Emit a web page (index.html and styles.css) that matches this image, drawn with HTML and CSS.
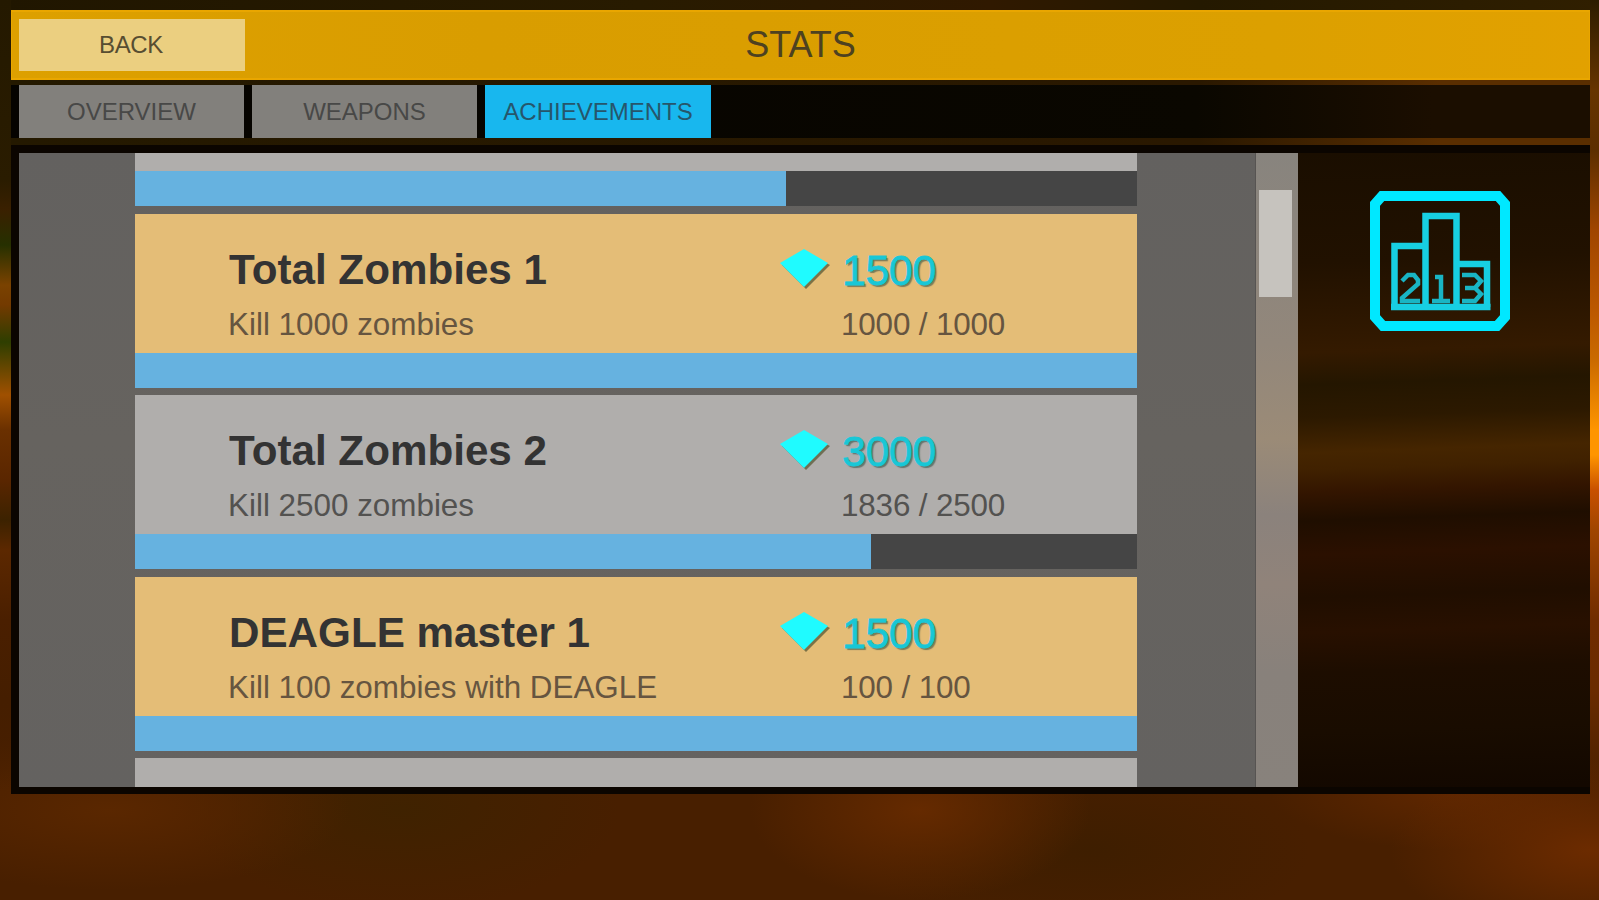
FILE: index.html
```
<!DOCTYPE html>
<html lang="en">

<head>
    <meta charset="UTF-8">
    <meta name="viewport" content="width=device-width, initial-scale=1.0">
    <title>Stats</title>
    <link rel="stylesheet" href="styles.css">
</head>

<body>
    <svg class="sprite" width="0" height="0">
        <symbol id="gem" viewBox="0 0 52 44">
            <path d="M3 17 L27 4 L51 17 L27 41 Z" fill="#5a5a35" opacity="0.75" />
            <path d="M1 15 L25 1 L49 15 L25 39 Z" fill="#1ffbff" />
        </symbol>
    </svg>
    <div class="wrapper">
        <header class="header">
            <button class="back">BACK</button>
            <h1 class="header__title">STATS</h1>
        </header>
        <nav class="tabs">
            <button class="tab">OVERVIEW</button>
            <button class="tab">WEAPONS</button>
            <button class="tab tab_active">ACHIEVEMENTS</button>
        </nav>
        <main class="panel">
            <div class="content">
                <div class="list">
                    <div class="item">
                        <div class="item__body"></div>
                        <div class="progress"><div class="progress__fill" style="width: 65%"></div></div>
                    </div>
                    <div class="item item_done">
                        <div class="item__body">
                            <div class="item__title">Total Zombies 1</div>
                            <div class="reward"><svg class="gem"><use href="#gem" /></svg>1500</div>
                            <div class="item__text">Kill 1000 zombies</div>
                            <div class="item__count">1000 / 1000</div>
                        </div>
                        <div class="progress"><div class="progress__fill" style="width: 100%"></div></div>
                    </div>
                    <div class="item">
                        <div class="item__body">
                            <div class="item__title">Total Zombies 2</div>
                            <div class="reward"><svg class="gem"><use href="#gem" /></svg>3000</div>
                            <div class="item__text">Kill 2500 zombies</div>
                            <div class="item__count">1836 / 2500</div>
                        </div>
                        <div class="progress"><div class="progress__fill" style="width: 73.44%"></div></div>
                    </div>
                    <div class="item item_done">
                        <div class="item__body">
                            <div class="item__title">DEAGLE master 1</div>
                            <div class="reward"><svg class="gem"><use href="#gem" /></svg>1500</div>
                            <div class="item__text">Kill 100 zombies with DEAGLE</div>
                            <div class="item__count">100 / 100</div>
                        </div>
                        <div class="progress"><div class="progress__fill" style="width: 100%"></div></div>
                    </div>
                    <div class="item">
                        <div class="item__body"></div>
                    </div>
                </div>
                <div class="scroll">
                    <div class="scroll__thumb"></div>
                </div>
            </div>
            <aside class="side">
                <svg class="leaderboard" viewBox="0 0 142 142" fill="none">
                    <path d="M13 6 H129 L136 14 V127 L128 136 H14 L6 127 V14 Z" stroke="#00e8ff" stroke-width="10" />
                    <g stroke="#17cfe2" stroke-width="6.500">
                        <path d="M25.5 117 V56 H56" />
                        <path d="M56.500 117 V26 H87.500 V117" />
                        <path d="M87.500 74 H118 V117" />
                        <path d="M22 117 H121.500" />
                    </g>
                    <g stroke="#19b5c4" stroke-width="4.500">
                        <path d="M33 91 L39 85 H45 L49 90 V94 L33 108 V111 H51" />
                        <path d="M66 87 H72 V110 M63 111 H81" />
                        <path d="M93 85 H106 L112 91 L106 98 H96 M106 98 L112 104 L106 111 H93" />
                    </g>
                </svg>
            </aside>
        </main>
    </div>
</body>

</html>
```
FILE: styles.css
```
* {
    box-sizing: border-box;
    margin: 0;
    padding: 0;
}

body {
    width: 100vw;
    height: 100vh;
    overflow: hidden;
    font-family: "Liberation Sans", Arial, sans-serif;
    color: #333;
    background:
        linear-gradient(#241900 0, #2a1c00 180px, #3a2000 210px, #263000 245px, #7a4200 285px, #733a00 305px, #2e3e00 342px, #a05000 395px, #6a3000 430px, #5a2600 480px, #3c2200 520px, #5c2800 550px, #4a1f00 620px, #451e00 700px, transparent 790px) left / 11px 100% no-repeat,
        linear-gradient(#2c1c00 0, #663400 90px, #5c2e00 150px, #a04500 230px, #bd5900 315px, #ca6a00 360px, #ff9500 430px, #ff9500 455px, #c85000 490px, #a04500 530px, #702c00 620px, #6a2b00 690px, transparent 790px) right / 9px 100% no-repeat,
        linear-gradient(to right, #201600, #281b00 40%, #301900 62%, #241900 75%, #301f00) top / 100% 12px no-repeat,
        linear-gradient(to right, #241900, #2a1800 75%, #5a2e00 90%) top / 100% 200px no-repeat,
        radial-gradient(ellipse 170px 90px at 920px 810px, #652a00, transparent) no-repeat,
        radial-gradient(ellipse 240px 80px at 110px 810px, #5a2700, transparent) no-repeat,
        radial-gradient(ellipse 220px 100px at 400px 810px, #3f2200, transparent) no-repeat,
        radial-gradient(ellipse 220px 90px at 1090px 850px, #3e1e00, transparent) no-repeat,
        radial-gradient(ellipse 200px 90px at 1590px 850px, #6c2b00, transparent) no-repeat,
        radial-gradient(ellipse 180px 60px at 1450px 790px, #602700, transparent) no-repeat,
        #481f00;
}

button {
    border: none;
    font-family: inherit;
    color: inherit;
}

.sprite {
    position: absolute;
}

.wrapper {
    padding: 10px 9px 0 11px;
}

.header {
    height: 70px;
    padding: 7px 7px 9px;
    display: grid;
    grid-template-columns: 226px 1fr 226px;
    align-items: center;
    background: linear-gradient(to right, #dda000, #d99d00 30%, #dca000 80%, #e2a100);
    border: 2px solid #e9a600;
    border-width: 2px 1px;
}

.back {
    height: 52px;
    padding-right: 2px;
    font-size: 24px;
    letter-spacing: -0.4px;
    color: #574d31;
    background: #ebcf80;
}

.header__title {
    font-size: 36px;
    font-weight: 400;
    text-align: center;
    color: #4d4120;
}

.tabs {
    height: 53px;
    margin-top: 5px;
    padding-left: 8px;
    display: flex;
    gap: 8px;
    background: linear-gradient(to right, #050300, #0a0700 75%, #1b0e00 90%);
}

.tab {
    width: 225px;
    font-size: 24px;
    color: #484847;
    background: #82807c;
}

.tab_active {
    width: 226px;
    color: #26566b;
    background: #18b7ee;
}

.panel {
    height: 649px;
    margin-top: 7px;
    padding: 8px 0 7px 8px;
    display: flex;
    background: #0b0500;
}

.content {
    width: 1279px;
    display: flex;
    justify-content: space-between;
    overflow: hidden;
    background: linear-gradient(#63615f, #66635f 45%, #646260);
}

.list {
    width: 1002px;
    height: 900px;
    margin: -120.6px 0 0 116px;
    display: flex;
    flex-direction: column;
    gap: 7.5px;
    flex-shrink: 0;
}

.item {
    height: 174px;
    flex-shrink: 0;
    background: #b0aeac;
}

.item_done {
    background: #e4bd77;
}

.item__body {
    height: 139px;
    padding: 31px 0 0 94px;
    display: grid;
    grid-template-columns: 550px 1fr;
    grid-template-rows: 50px 58px;
}

.item__title {
    font-size: 42.2px;
    font-weight: 700;
    line-height: 50px;
}

.reward {
    display: flex;
    align-items: center;
    gap: 11px;
    font-size: 43px;
    line-height: 50px;
    letter-spacing: -0.5px;
    color: #18c7d6;
    -webkit-text-stroke: 0.8px #18c7d6;
    text-shadow: 2px 2px 1px rgba(50, 80, 70, 0.6);
}

.gem {
    width: 52px;
    height: 44px;
}

.item__text,
.item__count {
    margin-left: -1px;
    font-size: 31.4px;
    line-height: 59px;
    color: #665540;
}

.item:not(.item_done) .item__text,
.item:not(.item_done) .item__count {
    color: #535250;
}

.item__count {
    padding-left: 63px;
    letter-spacing: -0.15px;
}

.progress {
    height: 35px;
    background: #454545;
}

.progress__fill {
    height: 100%;
    background: #66b2e0;
}

.scroll {
    width: 43px;
    height: 100%;
    padding: 37px 6px 0 3px;
    border-left: 1px solid #575452;
    background: linear-gradient(#88847e, #92877b 30%, #9b8b77 45%, #8b827c 57%, #90837a 68%, #88817b 82%, #88827c);
}

.scroll__thumb {
    height: 107px;
    background: #c6c3be;
}

.side {
    flex: 1;
    padding: 37px 0 0 71px;
    background: linear-gradient(178deg, #1a0e00 0, #211100 110px, #341a00 200px, #241600 232px, #2c1900 265px, #452500 300px, #402100 317px, #331500 340px, #1f0e00 368px, #2b1000 402px, #200e00 445px, #281000 480px, #1d0d00 520px, #190c00 580px, #130800 640px);
}

.leaderboard {
    width: 142px;
    height: 142px;
}
```
